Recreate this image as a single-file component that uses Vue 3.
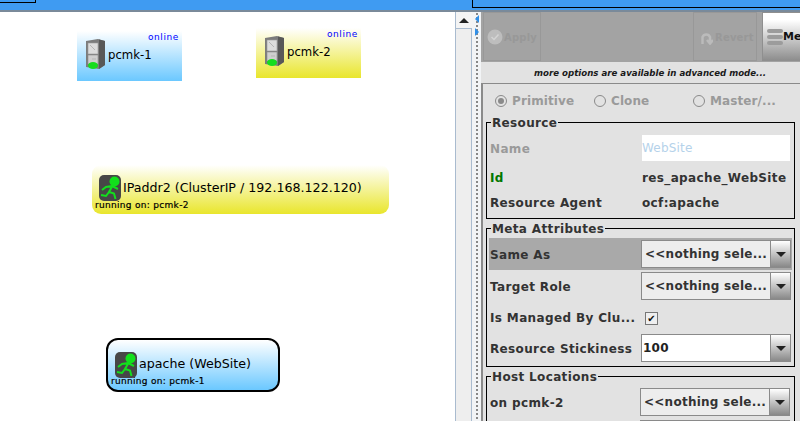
<script setup>
const metaRows = [
  { label: 'Same As', kind: 'select', value: '<<nothing sele...', hot: true },
  { label: 'Target Role', kind: 'select', value: '<<nothing sele...' },
  { label: 'Is Managed By Clu...', kind: 'check' },
  { label: 'Resource Stickiness', kind: 'edit', value: '100' }
]
</script>

<template>
  <div class="app">
    <div class="topbar">
      <div class="tab-left"></div>
      <div class="tab-right"></div>
    </div>
    <div class="main">
      <div class="canvas">
        <div class="node host blue n1">
          <svg class="server" viewBox="0 0 20 32" width="20" height="32">
            <path d="M0 3 L12 1 L19 3 L19 27 L13 31 L0 29 Z" fill="#7c7c7c" />
            <path d="M13 1.500 L19 3 L19 27 L13 31 Z" fill="#585858" />
            <rect x="2" y="5" width="10" height="11" fill="#dcdcdc" stroke="#9a9a9a" stroke-width="0.600" />
            <rect x="2" y="17" width="10" height="9" fill="#cfcfcf" stroke="#8c8c8c" stroke-width="0.600" />
            <path d="M4 7 L9 12 M6 21 L10 21" stroke="#b5b5b5" />
            <ellipse cx="7" cy="27.500" rx="5" ry="3.500" fill="#16dd1e" />
          </svg>
          <span class="node-name">pcmk-1</span>
          <span class="online">online</span>
        </div>
        <div class="node host yellow n2">
          <svg class="server" viewBox="0 0 20 32" width="20" height="32">
            <path d="M0 3 L12 1 L19 3 L19 27 L13 31 L0 29 Z" fill="#7c7c7c" />
            <path d="M13 1.500 L19 3 L19 27 L13 31 Z" fill="#585858" />
            <rect x="2" y="5" width="10" height="11" fill="#dcdcdc" stroke="#9a9a9a" stroke-width="0.600" />
            <rect x="2" y="17" width="10" height="9" fill="#cfcfcf" stroke="#8c8c8c" stroke-width="0.600" />
            <path d="M4 7 L9 12 M6 21 L10 21" stroke="#b5b5b5" />
            <ellipse cx="7" cy="27.500" rx="5" ry="3.500" fill="#16dd1e" />
          </svg>
          <span class="node-name">pcmk-2</span>
          <span class="online">online</span>
        </div>
        <div class="node svc yellow n3">
          <svg class="runner" viewBox="0 0 22 26" width="22" height="26">
            <rect width="22" height="26" rx="5" fill="#474747" />
            <circle cx="15.500" cy="6.500" r="5" fill="#12e01c" />
            <path d="M14 10 L10 17 L15 18.500 L16.500 24 M10 17 L7 21 L2 20 M13 11 L7 12 L3 15 M13 11 L19 14" fill="none" stroke="#12e01c" stroke-width="2" />
          </svg>
          <span class="svc-name">IPaddr2 (ClusterIP / 192.168.122.120)</span>
          <span class="running">running on: pcmk-2</span>
        </div>
        <div class="node svc blue selected n4">
          <svg class="runner" viewBox="0 0 22 26" width="22" height="26">
            <rect width="22" height="26" rx="5" fill="#474747" />
            <circle cx="15.500" cy="6.500" r="5" fill="#12e01c" />
            <path d="M14 10 L10 17 L15 18.500 L16.500 24 M10 17 L7 21 L2 20 M13 11 L7 12 L3 15 M13 11 L19 14" fill="none" stroke="#12e01c" stroke-width="2" />
          </svg>
          <span class="svc-name">apache (WebSite)</span>
          <span class="running">running on: pcmk-1</span>
        </div>
      </div>

      <div class="scrollbar">
        <div class="scroll-up"><i></i></div>
        <div class="scroll-track"></div>
      </div>

      <div class="divider">
        <i class="arrow-l"></i>
        <i class="arrow-r"></i>
      </div>

      <div class="panel">
        <div class="toolbar">
          <div class="tool apply">
            <svg width="16" height="16" viewBox="0 0 16 16">
              <circle cx="8" cy="8" r="7.500" fill="#bdbdbd" />
              <path d="M4.500 8 L7 10.500 L11.500 5.500" fill="none" stroke="#d4d4d4" stroke-width="1.500" />
            </svg>
            <span>Apply</span>
          </div>
          <div class="tool revert">
            <svg width="14" height="15" viewBox="0 0 14 15">
              <path d="M3.500 14 V7 A4 4 0 0 1 11 7 V12 M8 10 L11 13.500 L14 10" fill="none" stroke="#bbb" stroke-width="2.500" />
            </svg>
            <span>Revert</span>
          </div>
          <div class="menu-btn">
            <div class="burger"><i></i><i></i><i></i></div>
            <span>Me</span>
          </div>
        </div>
        <div class="note">more options are available in advanced mode...</div>
        <div class="form">
          <div class="radios">
            <label class="radio on"><i></i>Primitive</label>
            <label class="radio"><i></i>Clone</label>
            <label class="radio"><i></i>Master/...</label>
          </div>

          <fieldset class="group resource">
            <legend>Resource</legend>
            <div class="row name-row">
              <span class="label muted">Name</span>
              <div class="name-input">WebSite</div>
            </div>
            <div class="row text-row">
              <span class="label green">Id</span>
              <span class="val">res_apache_WebSite</span>
            </div>
            <div class="row text-row">
              <span class="label">Resource Agent</span>
              <span class="val">ocf:apache</span>
            </div>
          </fieldset>

          <fieldset class="group meta">
            <legend>Meta Attributes</legend>
            <div
              v-for="r in metaRows"
              :key="r.label"
              class="row attr"
              :class="{ hot: r.hot, 'check-row': r.kind === 'check' }"
            >
              <span class="label">{{ r.label }}</span>
              <div v-if="r.kind === 'select'" class="combo">
                <span>{{ r.value }}</span><b><i></i></b>
              </div>
              <div v-else-if="r.kind === 'edit'" class="combo edit">
                <span>{{ r.value }}</span><b><i></i></b>
              </div>
              <div v-else class="check">✔</div>
            </div>
          </fieldset>

          <fieldset class="group hosts">
            <legend>Host Locations</legend>
            <div class="row attr">
              <span class="label">on pcmk-2</span>
              <div class="combo"><span>&lt;&lt;nothing sele...</span><b><i></i></b></div>
            </div>
            <div class="row attr">
              <span class="label"></span>
              <div class="combo"><span></span><b><i></i></b></div>
            </div>
          </fieldset>
        </div>
      </div>
    </div>
  </div>
</template>

<style>
html, body { margin: 0; background: #fff; overflow: hidden; }
</style>

<style scoped>
.app {
  width: 800px;
  height: 421px;
  overflow: hidden;
  display: flex;
  flex-direction: column;
  font-family: "DejaVu Sans", sans-serif;
  color: #333;
}

.topbar {
  height: 10px;
  flex: none;
  background: #3f9bf2;
  border-bottom: 2px solid #7a8a9a;
  display: flex;
  justify-content: space-between;
}
.tab-left {
  width: 36px;
  height: 3px;
  border: solid #000;
  border-width: 0 1px 1px 0;
  box-sizing: border-box;
}
.tab-right {
  width: 328px;
  height: 8px;
  box-sizing: border-box;
  border: solid #000;
  border-width: 0 0 1px 1px;
}

.main {
  flex: 1;
  display: flex;
  min-height: 0;
}

/* graph canvas */
.canvas {
  width: 455px;
  flex: none;
  background: #fff;
  position: relative;
}
.node {
  position: absolute;
  box-sizing: border-box;
  color: #000;
}
.blue { background: linear-gradient(#fff, #6bc8ff); }
.yellow { background: linear-gradient(#fff, #e9e62c); }
.n1 { left: 77px; top: 19px; width: 105px; height: 50px; }
.n2 { left: 256px; top: 16px; width: 105px; height: 50px; }
.n3 { left: 92px; top: 153px; width: 297px; height: 49px; border-radius: 9px; }
.n4 { left: 106px; top: 326px; width: 174px; height: 54px; border-radius: 12px; border: 2px solid #000; }

.server { position: absolute; left: 9px; top: 7px; }
.node-name { position: absolute; left: 31px; top: 15px; font-size: 11.700px; line-height: 18px; }
.online { position: absolute; right: 3px; top: 0; font-size: 9px; line-height: 12px; color: #0000ff; letter-spacing: 0.6px; }

.runner { position: absolute; left: 7px; top: 10px; }
.svc-name { position: absolute; left: 31px; top: 14px; font-size: 12.650px; line-height: 18px; white-space: nowrap; }
.running { position: absolute; left: 3px; top: 34px; font-size: 9px; line-height: 12px; letter-spacing: 0.3px; white-space: nowrap; -webkit-text-stroke: 0.2px #000; }
.n4 .runner { left: 7px; top: 12px; }
.n4 .svc-name { left: 31px; top: 15px; }
.n4 .running { left: 3px; top: 35px; }

/* scrollbar + split divider */
.scrollbar {
  width: 17px;
  flex: none;
  display: flex;
  flex-direction: column;
  box-sizing: border-box;
  border-left: 1px solid #a9bbcf;
}
.scroll-up {
  height: 16px;
  flex: none;
  background: #f4f4f4;
  display: flex;
  align-items: center;
  justify-content: center;
  border-bottom: 1px solid #a9bbcf;
}
.scroll-up i {
  border: solid transparent;
  border-width: 0 5px 5px;
  border-bottom-color: #222;
}
.scroll-track {
  flex: 1;
  background: #eeeeee;
  border-right: 1px solid #a9bbcf;
}
.divider {
  width: 9px;
  flex: none;
  position: relative;
  background:
    radial-gradient(circle, #888 0.8px, transparent 1px) 3px 0 / 4px 4px repeat-y,
    #f2f4f6;
}
.arrow-l, .arrow-r {
  position: absolute;
  border: solid transparent;
}
.arrow-l {
  left: 3px;
  top: 3px;
  border-width: 4px 4px 4px 0;
  border-right-color: #2f8fe8;
}
.arrow-r {
  left: 3px;
  top: 16px;
  border-width: 4px 0 4px 4px;
  border-left-color: #2f8fe8;
}

/* right panel */
.panel {
  flex: 1;
  min-width: 0;
  background: #e2e2e2;
  display: flex;
  flex-direction: column;
  font-size: 12px;
  font-weight: 700;
}
.toolbar {
  height: 50px;
  flex: none;
  background: #a3a3a3;
  display: flex;
  align-items: stretch;
  padding-left: 2px;
}
.tool {
  box-sizing: border-box;
  height: 49px;
  border: 1px solid #989898;
  display: flex;
  align-items: center;
  padding-top: 1px;
  color: #989898;
  font-size: 10px;
  letter-spacing: 0.2px;
}
.apply { width: 58px; padding-left: 3px; gap: 1px; }
.revert { width: 64px; margin-left: auto; padding-left: 5px; gap: 2px; }
.menu-btn {
  width: 38px;
  height: 49px;
  margin-left: 5px;
  box-sizing: border-box;
  border: 1px solid #8f8f8f;
  border-right: 0;
  background: linear-gradient(#fff 15%, #8e8e8e);
  display: flex;
  align-items: center;
  padding-left: 4px;
  color: #111;
  font-size: 11px;
}
.burger { display: flex; flex-direction: column; gap: 2px; }
.burger i { display: block; width: 16px; height: 4px; border-radius: 2px; background: #9c9c9c; }

.note {
  height: 22px;
  flex: none;
  box-sizing: border-box;
  padding-left: 19px;
  text-align: center;
  font-size: 8.650px;
  line-height: 22px;
  font-style: italic;
  color: #1a1a1a;
  border-bottom: 1px solid #8a8a8a;
}
.form {
  flex: 1;
  min-height: 0;
  border-left: 2px solid #8a8a8a;
  padding: 0 5px 0 3px;
  display: flex;
  flex-direction: column;
}
.radios {
  height: 31px;
  flex: none;
  box-sizing: border-box;
  padding-top: 2px;
  display: grid;
  grid-template-columns: 99px 99px 1fr;
  align-items: center;
  padding-left: 9px;
  color: #9a9a9a;
  letter-spacing: 0.1px;
}
.radio { display: flex; align-items: center; gap: 5px; }
.radio i {
  width: 10px;
  height: 10px;
  border: 1px solid #8a8a8a;
  border-radius: 50%;
  display: flex;
  align-items: center;
  justify-content: center;
}
.radio.on i::before {
  content: "";
  width: 6px;
  height: 6px;
  border-radius: 50%;
  background: #8a8a8a;
}

.group {
  margin: 0;
  padding: 0 2px;
  border: 1px solid #000;
  min-width: 0;
  flex: none;
}
.group legend {
  height: 15px;
  padding: 0 1px;
  margin-left: 2px;
  font-size: 12px;
  line-height: 17px;
  letter-spacing: 0.35px;
  color: #333;
}
.row {
  display: flex;
  align-items: center;
  justify-content: space-between;
  letter-spacing: 0.36px;
}
.label { padding-left: 1px; white-space: nowrap; }
.name-row .label, .attr .label { padding-top: 2px; }
.muted { color: #9a9a9a; }
.green { color: #007700; }
.resource { padding-bottom: 3px; }
.name-row { height: 26px; margin-top: 5px; margin-bottom: 4px; }
.name-input {
  width: 148px;
  height: 26px;
  margin-right: 2px;
  background: #fff;
  color: #b5d2ea;
  font-weight: 400;
  line-height: 26px;
  font-size: 12px;
  letter-spacing: 0.2px;
}
.text-row { height: 25px; }
.val { width: 150px; }

.meta { margin-top: 2px; padding-top: 2px; padding-bottom: 2px; }
.hosts { margin-top: 2px; padding-top: 2px; }
.attr { height: 32px; padding-right: 1px; }
.check-row { height: 30px; }
.attr.hot { background: #a9a9a9; }
.hosts .attr { padding-right: 2px; }
.combo {
  width: 150px;
  height: 28px;
  flex: none;
  box-sizing: border-box;
  border: 1px solid #8a8a8a;
  background: #ededed;
  display: flex;
  align-items: center;
  justify-content: space-between;
  padding-left: 3px;
  letter-spacing: 0.25px;
  white-space: nowrap;
}
.combo.edit { background: #fff; padding-left: 1px; color: #222; }
.combo b {
  width: 19px;
  height: 26px;
  flex: none;
  background: linear-gradient(#fff, #888);
  border-left: 1px solid #8a8a8a;
  display: flex;
  align-items: center;
  justify-content: center;
}
.combo b i {
  border: solid transparent;
  border-width: 5px 5px 0;
  border-top-color: #222;
}
.check {
  width: 11px;
  height: 11px;
  margin: 2px 133px 0 0;
  border: 1px solid #777;
  background: #efefef;
  font-size: 10px;
  line-height: 11px;
  text-align: center;
  color: #111;
}
</style>
